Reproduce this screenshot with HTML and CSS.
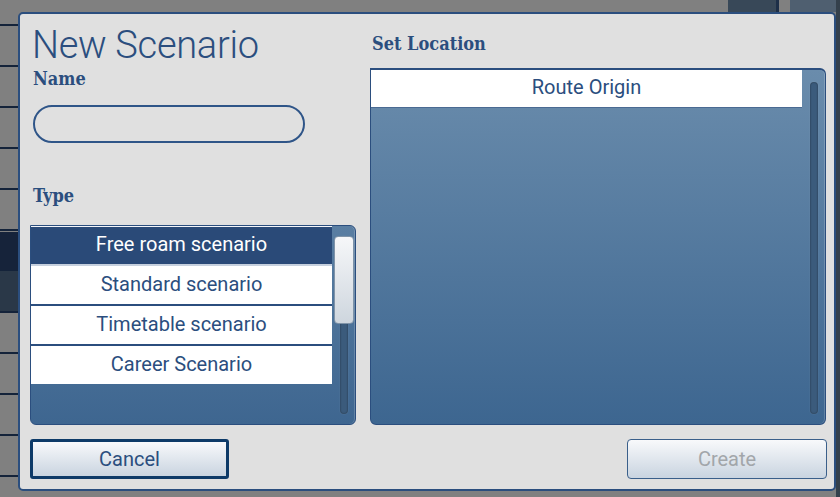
FILE: index.html
```html
<!DOCTYPE html>
<html>
<head>
<meta charset="utf-8">
<link rel="stylesheet" href="styles.css">
</head>
<body>
<div class="dialog">
  <div class="main">
    <div class="col-left">
      <h1 class="title">New Scenario</h1>
      <div class="label label-name">Name</div>
      <div class="input"></div>
      <div class="label label-type">Type</div>
      <div class="panel panel-type">
        <ul class="items">
          <li class="item selected">Free roam scenario</li>
          <li class="item">Standard scenario</li>
          <li class="item">Timetable scenario</li>
          <li class="item last">Career Scenario</li>
        </ul>
        <div class="scroll">
          <div class="groove"></div>
          <div class="thumb"></div>
        </div>
      </div>
    </div>
    <div class="col-right">
      <div class="label label-loc">Set Location</div>
      <div class="panel panel-loc">
        <ul class="items">
          <li class="item loc-item">Route Origin</li>
        </ul>
        <div class="scroll">
          <div class="groove"></div>
        </div>
      </div>
    </div>
  </div>
  <div class="footer">
    <button class="btn btn-cancel">Cancel</button>
    <button class="btn btn-create">Create</button>
  </div>
</div>
</body>
</html>
```

FILE: styles.css
```css
html, body {
  margin: 0;
  padding: 0;
  width: 840px;
  height: 497px;
  overflow: hidden;
}
body {
  background-color: #808080;
  background-image:
    linear-gradient(#16233a, #16233a),
    linear-gradient(#2a3848, #2a3848),
    repeating-linear-gradient(to bottom, transparent 0 24px, #14233a 24px 26px, transparent 26px 41px),
    linear-gradient(#34404c, #34404c),
    linear-gradient(#384858, #384858),
    linear-gradient(#1d2f48, #1d2f48),
    linear-gradient(#4f5f70, #4f5f70);
  background-size: 18px 38px, 18px 40px, 18px 497px, 4px 497px, 48px 12px, 3px 12px, 50px 12px;
  background-position: 0 232px, 0 271px, 0 0, 836px 0, 728px 0, 776px 0, 790px 0;
  background-repeat: no-repeat;
  padding: 12px 4px 6px 18px;
  box-sizing: border-box;
  font-family: Roboto, "Noto Sans", sans-serif;
}
.dialog {
  box-sizing: border-box;
  width: 818px;
  height: 479px;
  background: #e0e0e0;
  border: 2px solid #2b4e7e;
  border-radius: 5px;
  padding: 0 8px 10px 10px;
  display: flex;
  flex-direction: column;
}
.main {
  display: flex;
  gap: 14px;
  flex: 1;
  min-height: 0;
}
.col-left {
  width: 326px;
  display: flex;
  flex-direction: column;
}
.col-right {
  flex: 1;
  display: flex;
  flex-direction: column;
}
.title {
  margin: 9px 0 0 2px;
  font-family: Roboto, sans-serif;
  font-weight: 300;
  font-size: 38px;
  line-height: 44px;
  color: #2b4e7e;
  letter-spacing: -0.3px;
}
.label {
  font-family: "DejaVu Serif", serif;
  font-stretch: condensed;
  font-weight: bold;
  font-size: 18px;
  line-height: 22px;
  color: #2b4e7e;
  margin-left: 3px;
}
.label-name { margin-top: 1px; }
.input {
  margin: 15px 0 0 3px;
  width: 272px;
  height: 38px;
  box-sizing: border-box;
  border: 2px solid #2f5588;
  border-radius: 19px;
}
.label-type { margin-top: 42px; }
.label-loc { margin-top: 19px; margin-left: 2px; }
.panel {
  box-sizing: border-box;
  border: 1px solid #2b4e7e;
  border-top-width: 2px;
  border-radius: 0 6px 6px 6px;
  background: linear-gradient(to bottom, #6a8cac, #3d6690);
  box-shadow: inset -1px 0 0 rgba(255,255,255,0.18);
  display: flex;
  position: relative;
}
.panel-type {
  margin-top: 18px;
  height: 200px;
  background: linear-gradient(to bottom, #5a7ea2, #3e6690);
  border-top-width: 1px;
}
.panel-loc {
  margin-top: 13px;
  height: 357px;
}
.items {
  list-style: none;
  margin: 0;
  padding: 0;
  flex: 1;
}
.panel-type .items { border-top: 1px solid #f4f6fa; }
.item {
  height: 40px;
  box-sizing: border-box;
  background: #ffffff;
  border-bottom: 2px solid #2b4e7e;
  color: #2b4e7e;
  font-size: 20px;
  line-height: 36px;
  text-align: center;
}
.item.selected {
  background: #2a4a78;
  color: #ffffff;
  border-bottom: 2px solid #c6d0de;
  height: 39px;
  line-height: 35px;
}
.item.last { border-bottom: none; height: 38px; }
.loc-item {
  border-bottom: 1px solid #4a6a92;
  height: 38px;
  line-height: 34px;
}
.scroll {
  width: 23px;
  position: relative;
}
.groove {
  position: absolute;
  left: 8px;
  width: 8px;
  top: 10px;
  bottom: 10px;
  border-radius: 4px;
  background: #3b5b7c;
  box-shadow: inset 0 0 2px rgba(0,0,0,0.5), 0 0 1px rgba(255,255,255,0.3);
}
.panel-loc .groove { left: 8px; top: 12px; bottom: 10px; }
.thumb {
  position: absolute;
  left: 2px;
  top: 10px;
  width: 20px;
  height: 88px;
  box-sizing: border-box;
  border-radius: 4px;
  border: 1px solid #7f93a8;
  background: linear-gradient(to bottom, #f6f7f9, #ced6de);
}
.footer {
  display: flex;
  justify-content: space-between;
  margin-top: 14px;
  margin-right: -1px;
}
.btn {
  width: 200px;
  height: 40px;
  box-sizing: border-box;
  font-family: Roboto, sans-serif;
  font-size: 20px;
  background: linear-gradient(to bottom, #f8f9fb, #c9d4e0);
  padding: 0;
}
.btn-cancel {
  width: 199px;
  border: 3px solid #0d3a68;
  border-radius: 3px;
  color: #2b4e7e;
}
.btn-create {
  border: 1px solid #3a5f8a;
  border-radius: 4px;
  color: #a2a6aa;
}
```
